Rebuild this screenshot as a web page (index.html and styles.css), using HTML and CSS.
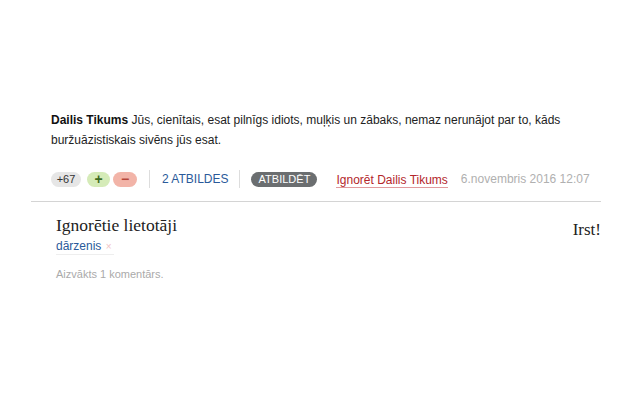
FILE: index.html
```html
<!DOCTYPE html>
<html lang="lv">
<head>
<meta charset="utf-8">
<link rel="stylesheet" href="styles.css">
</head>
<body>
<div class="wrap">
  <div class="comment">
    <p class="text"><b class="author">Dailis Tikums</b> Jūs, cienītais, esat pilnīgs idiots, muļķis un zābaks, nemaz nerunājot par to, kāds buržuāzistiskais sivēns jūs esat.</p>
    <div class="actions">
      <span class="pill score">+67</span>
      <span class="pill plus">+</span>
      <span class="pill minus">−</span>
      <span class="sep"></span>
      <a class="replies">2 ATBILDES</a>
      <span class="sep sep-b"></span>
      <span class="pill reply">ATBILDĒT</span>
      <a class="ignore">Ignorēt Dailis Tikums</a>
      <span class="date">6.novembris 2016 12:07</span>
    </div>
  </div>
  <div class="ignored">
    <div class="ig-left">
      <h3 class="ig-title">Ignorētie lietotāji</h3>
      <div class="ig-users"><a class="ig-user">dārzenis <span class="x">×</span></a></div>
      <p class="removed">Aizvākts 1 komentārs.</p>
    </div>
    <div class="irst">Irst!</div>
  </div>
</div>
</body>
</html>
```
FILE: styles.css
```css
html, body { margin: 0; padding: 0; background: #fff; }
body { font-family: "Liberation Sans", Arial, sans-serif; color: #222; }
.wrap { margin-left: 31px; width: 570px; padding-top: 110px; }
.comment { padding: 0 20px; border-bottom: 1px solid #d4d4d4; }
.text { margin: 0; font-size: 12px; line-height: 20px; color: #222; }
.author { font-weight: bold; color: #111; }
.actions { display: flex; align-items: center; height: 26px; margin-top: 16px; padding-bottom: 9px; white-space: nowrap; }
.actions > * { flex-shrink: 0; }
.pill { display: inline-flex; align-items: center; justify-content: center; height: 15px; border-radius: 8px; font-size: 11px; }
.score { width: 30px; background: #e6e6e6; color: #333; }
.plus { width: 23px; margin-left: 6px; background: #d5ebb8; color: #3d6b1f; font-weight: bold; font-size: 14px; }
.minus { width: 24px; margin-left: 3px; background: #f2b4a8; color: #b5453a; font-weight: bold; font-size: 14px; }
.sep { width: 1px; height: 18px; background: #ddd; margin: 0 12px; }
.sep-b { margin: 0 11px 0 11px; }
.replies { color: #2a5a9a; font-size: 12px; }
.reply { width: 66px; background: #6b6e70; color: #fff; font-size: 11px; }
.ignore { margin-left: 19px; color: #b3262b; font-size: 12px; border-bottom: 1px solid #e19a9d; line-height: 14px; margin-top: 2px; }
.date { margin-left: 13px; color: #b0b0b0; font-size: 12px; }
.ignored { display: flex; justify-content: space-between; padding: 13px 0 0 25px; }
.ig-title { margin: 0; font-family: "Liberation Serif", Georgia, serif; font-weight: normal; font-size: 17.5px; color: #222; line-height: 21px; }
.ig-users { margin-top: 0; }
.ig-user { display: inline-block; color: #2a5a9a; font-size: 12px; line-height: 15px; border-bottom: 1px solid #eee; padding-right: 2px; }
.x { color: #f1c4c6; font-size: 10px; margin-left: 1px; }
.removed { margin: 13px 0 0; color: #aaa; font-size: 11px; }
.irst { font-family: "Liberation Serif", "Times New Roman", serif; font-size: 17px; color: #222; margin-top: 5px; }
```
